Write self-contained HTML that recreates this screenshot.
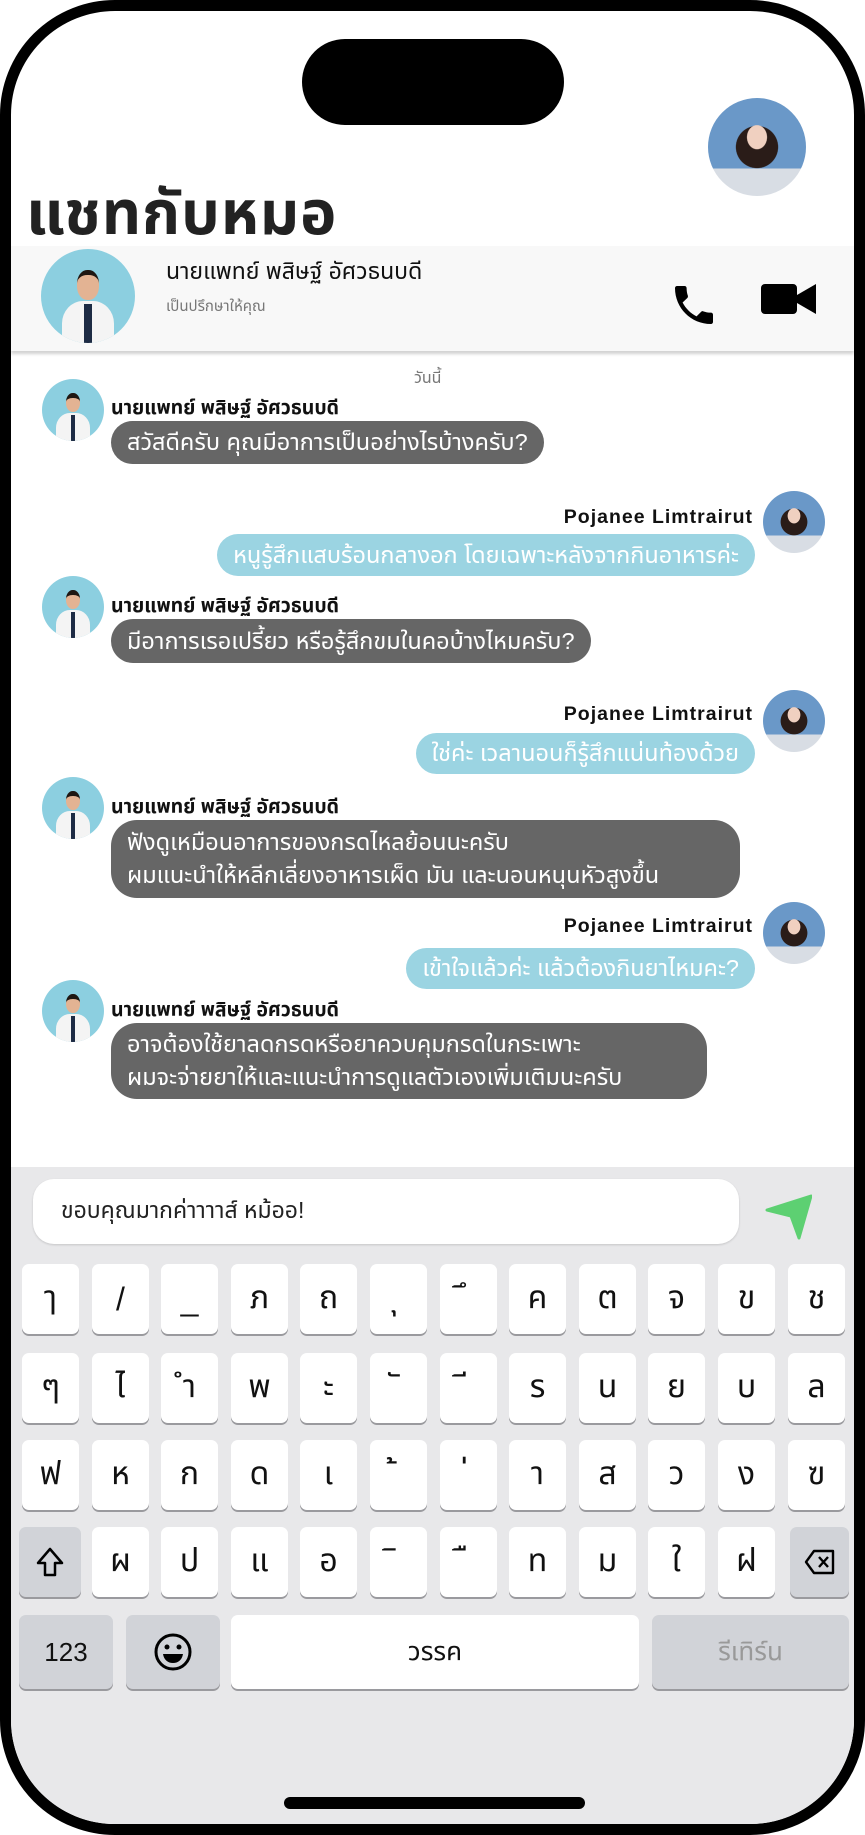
<!DOCTYPE html>
<html><head><meta charset="utf-8">
<style>
*{margin:0;padding:0;box-sizing:border-box}
html,body{width:865px;height:1835px;background:#fff;overflow:hidden;font-family:"Liberation Sans","Noto Sans Thai","Tlwg Typist",sans-serif}
.frame{position:absolute;left:0;top:0;width:865px;height:1835px;border:11px solid #000;border-radius:115px;overflow:hidden;background:#fff}
.abs{position:absolute}
.island{left:291px;top:28px;width:262px;height:86px;background:#000;border-radius:43px}
.title{left:15px;top:159px;font-size:61px;font-weight:bold;color:#222;letter-spacing:1px}
.hdr{left:0;top:235px;width:843px;height:105px;background:#f8f8f8;box-shadow:0 3px 3px rgba(0,0,0,.18)}
.doc{border-radius:50%;background:#8ccfe0;overflow:hidden}
.doc i{position:absolute;left:22%;top:55%;width:56%;height:60%;background:#f4f4f4;border-radius:40% 40% 0 0}
.doc b{position:absolute;left:46%;top:58%;width:8%;height:42%;background:#1d2b44}
.doc u{position:absolute;left:38%;top:22%;width:24%;height:32%;background:#e3b393;border-radius:45%;border-top:5px solid #1e1712}
.girl{border-radius:50%;background:radial-gradient(ellipse at 50% 40%,#f0d0c0 0 14%,transparent 15%),radial-gradient(ellipse at 50% 50%,#2a1c18 0 30%,transparent 31%),linear-gradient(to bottom,transparent 72%,#d8dde4 72%),#6a98c8}
.name{font-size:23px;color:#111}
.sub{font-size:15px;color:#777}
.today{font-size:16px;color:#777}
.n{font-size:19.5px;font-weight:bold;color:#111;white-space:nowrap}
.p{letter-spacing:1px}
.b{color:#fff;font-size:23.5px;border-radius:22px;padding:0 16px;display:flex;align-items:center;white-space:nowrap;line-height:33px}
.d{background:#666}
.u{background:#9bd4e2}
.kb{left:0;top:1156px;width:843px;height:680px;background:#e8e8ea}
.inp{left:22px;top:1168px;width:706px;height:65px;background:#fff;border-radius:21px;box-shadow:0 1px 2px rgba(0,0,0,.15);font-size:23px;color:#222;padding:16px 28px}
.k{position:absolute;width:57px;height:70px;background:#fff;border-radius:7px;box-shadow:0 2px 0 #9a9a9e;display:flex;align-items:center;justify-content:center;font-size:32px;color:#111}
.g{background:#d1d3d8}
.home{left:273px;top:1786px;width:301px;height:12px;background:#000;border-radius:6px}
</style></head><body>
<div class="frame">
<div class="abs island"></div>
<div class="abs girl" style="left:697px;top:87px;width:98px;height:98px"></div>
<div class="abs title">แชทกับหมอ</div>
<div class="abs hdr"></div>
<div class="abs doc" style="left:30px;top:238px;width:94px;height:94px"><i></i><b></b><u></u></div>
<div class="abs name" style="left:155px;top:245px">นายแพทย์ พสิษฐ์ อัศวธนบดี</div>
<div class="abs sub" style="left:155px;top:284px">เป็นปรึกษาให้คุณ</div>
<svg class="abs" style="left:664px;top:274px" width="38" height="40" viewBox="3 3 18 18"><path d="M6.6 10.8c1.4 2.8 3.8 5.1 6.6 6.6l2.2-2.2c.3-.3.7-.4 1-.2 1.1.4 2.3.6 3.6.6.6 0 1 .4 1 1V20c0 .6-.4 1-1 1C10.6 21 3 13.4 3 4c0-.6.4-1 1-1h3.5c.6 0 1 .4 1 1 0 1.3.2 2.5.6 3.6.1.3 0 .7-.2 1z" fill="#000"/></svg>
<svg class="abs" style="left:750px;top:272px" width="56" height="32" viewBox="0 0 56 32"><rect x="0" y="1" width="36" height="30" rx="4" fill="#000"/><path d="M36 12 55 1v30L36 20z" fill="#000"/></svg>
<div class="abs today" style="left:403px;top:356px">วันนี้</div>

<div class="abs doc" style="left:31px;top:368px;width:62px;height:62px"><i></i><b></b><u></u></div>
<div class="abs n" style="left:100px;top:382px">นายแพทย์ พสิษฐ์ อัศวธนบดี</div>
<div class="abs b d" style="left:100px;top:410px;height:43px">สวัสดีครับ คุณมีอาการเป็นอย่างไรบ้างครับ?</div>

<div class="abs girl" style="left:752px;top:480px;width:62px;height:62px"></div>
<div class="abs n p" style="right:101px;top:495px">Pojanee Limtrairut</div>
<div class="abs b u" style="right:99px;top:523px;height:42px">หนูรู้สึกแสบร้อนกลางอก โดยเฉพาะหลังจากกินอาหารค่ะ</div>

<div class="abs doc" style="left:31px;top:565px;width:62px;height:62px"><i></i><b></b><u></u></div>
<div class="abs n" style="left:100px;top:580px">นายแพทย์ พสิษฐ์ อัศวธนบดี</div>
<div class="abs b d" style="left:100px;top:608px;height:44px">มีอาการเรอเปรี้ยว หรือรู้สึกขมในคอบ้างไหมครับ?</div>

<div class="abs girl" style="left:752px;top:679px;width:62px;height:62px"></div>
<div class="abs n p" style="right:101px;top:692px">Pojanee Limtrairut</div>
<div class="abs b u" style="right:99px;top:722px;height:41px">ใช่ค่ะ เวลานอนก็รู้สึกแน่นท้องด้วย</div>

<div class="abs doc" style="left:31px;top:766px;width:62px;height:62px"><i></i><b></b><u></u></div>
<div class="abs n" style="left:100px;top:781px">นายแพทย์ พสิษฐ์ อัศวธนบดี</div>
<div class="abs b d" style="left:100px;top:809px;width:629px;height:78px;border-radius:26px">ฟังดูเหมือนอาการของกรดไหลย้อนนะครับ<br>ผมแนะนำให้หลีกเลี่ยงอาหารเผ็ด มัน และนอนหนุนหัวสูงขึ้น</div>

<div class="abs girl" style="left:752px;top:891px;width:62px;height:62px"></div>
<div class="abs n p" style="right:101px;top:904px">Pojanee Limtrairut</div>
<div class="abs b u" style="right:99px;top:937px;height:41px">เข้าใจแล้วค่ะ แล้วต้องกินยาไหมคะ?</div>

<div class="abs doc" style="left:31px;top:969px;width:62px;height:62px"><i></i><b></b><u></u></div>
<div class="abs n" style="left:100px;top:984px">นายแพทย์ พสิษฐ์ อัศวธนบดี</div>
<div class="abs b d" style="left:100px;top:1012px;width:596px;height:76px;border-radius:26px">อาจต้องใช้ยาลดกรดหรือยาควบคุมกรดในกระเพาะ<br>ผมจะจ่ายยาให้และแนะนำการดูแลตัวเองเพิ่มเติมนะครับ</div>

<div class="abs kb"></div>
<div class="abs inp">ขอบคุณมากค่าาาาส์ หม้ออ!</div>
<svg class="abs" style="left:753px;top:1183px" width="48" height="46" viewBox="0 0 48 46"><path d="M3 16 47 2 35 44 27 22z" fill="#5dd072" stroke="#5dd072" stroke-width="3" stroke-linejoin="round"/></svg>

<div class="k" style="left:11px;top:1253px">ๅ</div><div class="k" style="left:81px;top:1253px">/</div><div class="k" style="left:150px;top:1253px">_</div><div class="k" style="left:220px;top:1253px">ภ</div><div class="k" style="left:289px;top:1253px">ถ</div><div class="k" style="left:359px;top:1253px">ุ</div><div class="k" style="left:429px;top:1253px">ึ</div><div class="k" style="left:498px;top:1253px">ค</div><div class="k" style="left:568px;top:1253px">ต</div><div class="k" style="left:637px;top:1253px">จ</div><div class="k" style="left:707px;top:1253px">ข</div><div class="k" style="left:777px;top:1253px">ช</div>
<div class="k" style="left:11px;top:1342px">ๆ</div><div class="k" style="left:81px;top:1342px">ไ</div><div class="k" style="left:150px;top:1342px">ำ</div><div class="k" style="left:220px;top:1342px">พ</div><div class="k" style="left:289px;top:1342px">ะ</div><div class="k" style="left:359px;top:1342px">ั</div><div class="k" style="left:429px;top:1342px">ี</div><div class="k" style="left:498px;top:1342px">ร</div><div class="k" style="left:568px;top:1342px">น</div><div class="k" style="left:637px;top:1342px">ย</div><div class="k" style="left:707px;top:1342px">บ</div><div class="k" style="left:777px;top:1342px">ล</div>
<div class="k" style="left:11px;top:1429px">ฟ</div><div class="k" style="left:81px;top:1429px">ห</div><div class="k" style="left:150px;top:1429px">ก</div><div class="k" style="left:220px;top:1429px">ด</div><div class="k" style="left:289px;top:1429px">เ</div><div class="k" style="left:359px;top:1429px">้</div><div class="k" style="left:429px;top:1429px">่</div><div class="k" style="left:498px;top:1429px">า</div><div class="k" style="left:568px;top:1429px">ส</div><div class="k" style="left:637px;top:1429px">ว</div><div class="k" style="left:707px;top:1429px">ง</div><div class="k" style="left:777px;top:1429px">ฃ</div>
<div class="k g" style="left:8px;top:1516px;width:62px"><svg width="30" height="32" viewBox="0 0 30 32"><path d="M15 3 3 17h7v12h10V17h7z" fill="none" stroke="#000" stroke-width="2.5" stroke-linejoin="round"/></svg></div>
<div class="k" style="left:81px;top:1516px">ผ</div><div class="k" style="left:150px;top:1516px">ป</div><div class="k" style="left:220px;top:1516px">แ</div><div class="k" style="left:289px;top:1516px">อ</div><div class="k" style="left:359px;top:1516px">ิ</div><div class="k" style="left:429px;top:1516px">ื</div><div class="k" style="left:498px;top:1516px">ท</div><div class="k" style="left:568px;top:1516px">ม</div><div class="k" style="left:637px;top:1516px">ใ</div><div class="k" style="left:707px;top:1516px">ฝ</div>
<div class="k g" style="left:779px;top:1516px;width:59px"><svg width="32" height="26" viewBox="0 0 32 26"><path d="M10 2h19v22H10L2 13z" fill="none" stroke="#000" stroke-width="2.4" stroke-linejoin="round"/><path d="M15 8l9 10M24 8l-9 10" stroke="#000" stroke-width="2.4"/></svg></div>
<div class="k g" style="left:8px;top:1604px;width:94px;height:74px;font-size:26px">123</div>
<div class="k g" style="left:115px;top:1604px;width:94px;height:74px"><svg width="40" height="40" viewBox="0 0 40 40"><circle cx="20" cy="20" r="17" fill="none" stroke="#000" stroke-width="3"/><circle cx="14" cy="15" r="2.5"/><circle cx="26" cy="15" r="2.5"/><path d="M10 22h20c-1 6-5 9-10 9s-9-3-10-9z"/></svg></div>
<div class="k" style="left:220px;top:1604px;width:408px;height:74px;font-size:26px">วรรค</div>
<div class="k g" style="left:641px;top:1604px;width:197px;height:74px;font-size:26px;color:#999">รีเทิร์น</div>
<div class="abs home"></div>
</div>
</body></html>
